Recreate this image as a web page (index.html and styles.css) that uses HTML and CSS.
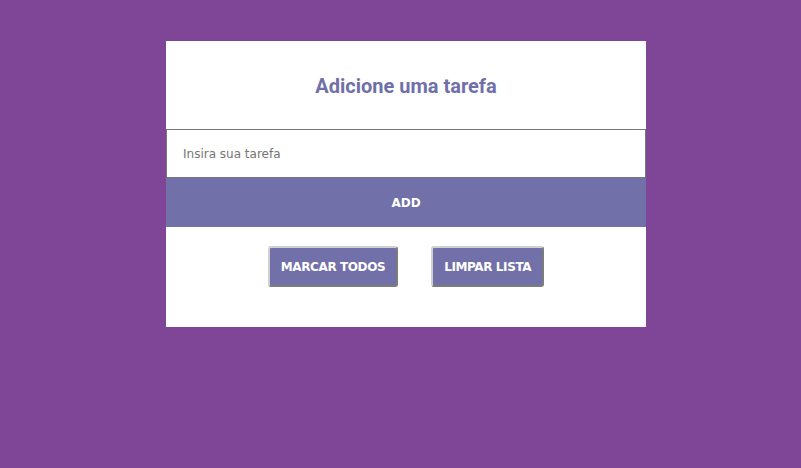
FILE: index.html
```html
<!DOCTYPE html>
<html lang="pt-BR">
<head>
<meta charset="utf-8">
<title>Lista de tarefas</title>
<link rel="stylesheet" href="styles.css">
</head>
<body>
<main class="card">
  <header class="card-header">
    <h1 class="title">Adicione uma tarefa</h1>
  </header>
  <input class="task-input" type="text" placeholder="Insira sua tarefa">
  <button class="add-btn" type="button">ADD</button>
  <div class="actions">
    <button class="action-btn" type="button">MARCAR TODOS</button>
    <button class="action-btn" type="button">LIMPAR LISTA</button>
  </div>
</main>
</body>
</html>
```
FILE: styles.css
```css
* { box-sizing: border-box; }
body {
  margin: 0;
  padding-left: 11px;
  background: #7f4597;
  font-family: "DejaVu Sans", Verdana, sans-serif;
}
.card {
  width: 480px;
  margin: 41px auto 0;
  background: #ffffff;
  display: flex;
  flex-direction: column;
}
.card-header {
  height: 88px;
  display: flex;
  align-items: center;
  justify-content: center;
  padding-top: 2px;
}
.title {
  margin: 0;
  font-family: Roboto, "Liberation Sans", sans-serif;
  font-weight: 700;
  font-size: 20px;
  color: #7070a8;
}
.task-input {
  display: block;
  width: 100%;
  height: 49px;
  flex: 0 0 49px;
  margin: 0;
  border: 1px solid #767676;
  padding: 1px 16px 0;
  font-family: "DejaVu Sans", Verdana, sans-serif;
  font-size: 12px;
  color: #333;
  outline: none;
}
.task-input::placeholder { color: #757575; }
.add-btn {
  display: block;
  width: 100%;
  height: 49px;
  flex: 0 0 49px;
  margin: 0;
  padding-top: 2px;
  border: none;
  background: #7270a8;
  color: #ffffff;
  font-family: "DejaVu Sans", Verdana, sans-serif;
  font-weight: 700;
  font-size: 12px;
}
.actions {
  height: 100px;
  display: flex;
  justify-content: center;
  align-items: flex-start;
  gap: 33px;
  padding-top: 19px;
}
.action-btn {
  height: 41px;
  padding: 0 11px;
  border: 2px outset #d0d0d0;
  border-radius: 3px;
  background: #7270a8;
  color: #ffffff;
  font-family: "DejaVu Sans", Verdana, sans-serif;
  font-weight: 700;
  font-size: 12px;
  letter-spacing: -0.4px;
}
```
